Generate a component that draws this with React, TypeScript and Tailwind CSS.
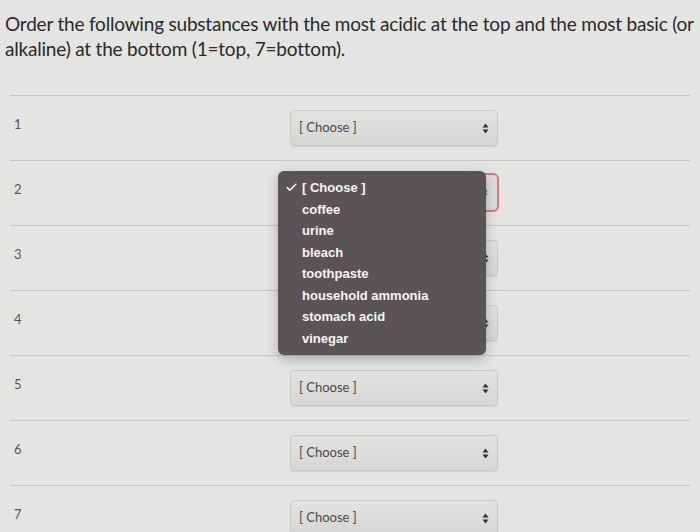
import { Check } from "lucide-react";

const options = [
  "coffee",
  "urine",
  "bleach",
  "toothpaste",
  "household ammonia",
  "stomach acid",
  "vinegar",
];

const Arrows = () => (
  <svg width="7" height="11" viewBox="0 0 7 11" className="shrink-0">
    <path d="M3.5 0.5 L6.5 4.5 L0.5 4.5 Z" fill="#333" />
    <path d="M3.5 10.5 L6.5 6.5 L0.5 6.5 Z" fill="#333" />
  </svg>
);

const Select = ({ focused }: { focused?: boolean }) => (
  <div
    className={
      focused
        ? "flex h-[39px] w-[210px] -mt-[2px] -ml-px items-center justify-between rounded-[6px] border-2 border-[#d9757c] bg-[#dcdcda] pl-[8px] pr-[9px]"
        : "flex h-[36px] w-[208px] items-center justify-between rounded-[4px] border border-[#c9c9c7] bg-gradient-to-b from-[#e2e2e0] to-[#d6d6d4] pl-[8px] pr-[8px] shadow-[0_1px_1px_rgba(0,0,0,0.08)]"
    }
  >
    <span className="text-[13px] text-[#4a4a4a]">[ Choose ]</span>
    <Arrows />
  </div>
);

const Menu = () => (
  <div className="absolute left-[-12px] top-[10px] z-10 w-[208px] rounded-[6px] bg-[#5a5457] py-[6px] shadow-[0_4px_12px_rgba(0,0,0,0.25)]">
    <div className="flex h-[21.5px] items-center font-['Liberation_Sans',sans-serif] text-[13px] font-bold text-[#f4f4f4]">
      <span className="flex w-[24px] justify-end pr-[4px]">
        <Check size={13} strokeWidth={3} />
      </span>
      [ Choose ]
    </div>
    {options.map((o) => (
      <div
        key={o}
        className="flex h-[21.5px] items-center pl-[24px] font-['Liberation_Sans',sans-serif] text-[13px] font-bold text-[#f4f4f4]"
      >
        {o}
      </div>
    ))}
  </div>
);

export default function App() {
  return (
    <div className="h-[532px] w-[700px] overflow-hidden bg-[#e4e4e2] font-['Lato',sans-serif]">
      <p className="px-[5px] pt-[11px] text-[19px] leading-[25px] tracking-[-0.2px] text-[#2a2a2a]">
        Order the following substances with the most acidic at the top and the most basic (or
        alkaline) at the bottom (1=top, 7=bottom).
      </p>

      <div className="mt-[34px] px-[10px]">
        {[1, 2, 3, 4, 5, 6, 7].map((n) => (
          <div key={n} className="flex h-[65px] border-t border-[#c6c6c4]">
            <div className="w-[280px] pl-[4px] pt-[19px] text-[13px] text-[#555]">{n}</div>
            <div className="relative pt-[14px]">
              <Select focused={n === 2} />
              {n === 2 && <Menu />}
            </div>
          </div>
        ))}
      </div>
    </div>
  );
}
